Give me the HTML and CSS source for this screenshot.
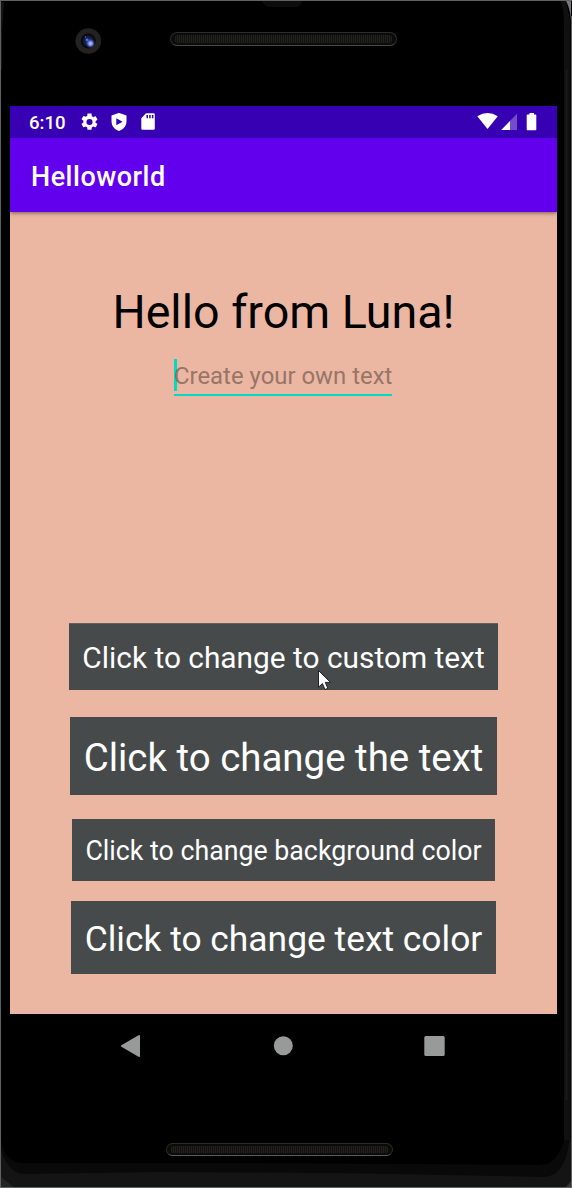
FILE: index.html
```html
<!DOCTYPE html>
<html lang="en">
<head>
<meta charset="utf-8">
<title>Helloworld</title>
<link rel="stylesheet" href="styles.css">
</head>
<body>
<div class="device">
  <svg class="shell" width="572" height="1188" viewBox="0 0 572 1188">
    <path d="M0 1134Q3 1161 20 1163H265L540 1165Q560 1164 565 1135L566 1050H572V1188H0Z" fill="#090909"/>
    <path d="M0 1145Q5 1170 22 1174L160 1172L340 1173L545 1177Q565 1175 569 1143L572 1138V1188H0Z" fill="#141414"/>
    <path d="M1 1177L14 1187H1Z" fill="#242321"/>
    <path d="M572 1180L566 1187H572Z" fill="#333"/>
    <path d="M561 1Q564 10 564 30V1140H570V20L566 1Z" fill="#101010"/>
    <path d="M566 1Q570 8 571 20V1Z" fill="#77787b"/>
    <path d="M566.5 70V1100" stroke="#1b1b1b" stroke-width="2"/>
    <path d="M262 1Q265 7 270 7H295Q301 7 302 1Z" fill="#0c0c0c"/>
    <path d="M1 2H4L2 30V70H1Z" fill="#151515"/>
    <path d="M0 .5H572M.5 0V1188M571.5 16V1188M0 1187.5H572" stroke="#606161"/>
  </svg>
  <header class="device-top">
    <svg class="camera" width="28" height="28" viewBox="0 0 28 28">
      <defs>
        <radialGradient id="lens"><stop offset="0" stop-color="#2b3c91"/><stop offset=".6" stop-color="#151d4c"/><stop offset="1" stop-color="#080910"/></radialGradient>
        <radialGradient id="glint"><stop offset="0" stop-color="#c0ccff"/><stop offset=".45" stop-color="#6f84e6"/><stop offset="1" stop-color="#2b3c91" stop-opacity="0"/></radialGradient>
      </defs>
      <circle cx="13.3" cy="14" r="12.8" fill="#232221"/>
      <circle cx="13.3" cy="14" r="7.5" fill="#08080c"/>
      <circle cx="13.3" cy="14" r="6.5" fill="url(#lens)"/>
      <circle cx="15.5" cy="16.5" r="4.8" fill="url(#glint)"/>
      <circle cx="12" cy="12.8" r="1.3" fill="#5a70cc"/>
      <circle cx="10.5" cy="10" r=".7" fill="#5a70cc"/>
    </svg>
    <div class="speaker"></div>
  </header>
  <main class="screen">
    <div class="status">
      <span class="clock">6:10</span>
      <svg class="gear" width="20" height="20" viewBox="2 2 20 20"><path fill="#fff" d="M19.14 12.94c.04-.3.06-.61.06-.94s-.02-.64-.07-.94l2.03-1.58c.18-.14.23-.41.12-.61l-1.92-3.32c-.12-.22-.37-.29-.59-.22l-2.39.96c-.5-.38-1.03-.7-1.62-.94l-.36-2.54A.48.48 0 0 0 13.92 2h-3.84c-.24 0-.43.17-.47.41l-.36 2.54c-.59.24-1.13.57-1.62.94l-2.39-.96c-.22-.08-.47 0-.59.22L2.74 8.47c-.12.21-.08.47.12.61l2.03 1.58c-.05.3-.09.63-.09.94s.02.64.07.94l-2.03 1.58c-.18.14-.23.41-.12.61l1.92 3.32c.12.22.37.29.59.22l2.39-.96c.5.38 1.03.7 1.62.94l.36 2.54c.05.24.24.41.48.41h3.84c.24 0 .44-.17.47-.41l.36-2.54c.59-.24 1.13-.56 1.62-.94l2.39.96c.22.08.47 0 .59-.22l1.92-3.32c.12-.22.07-.47-.12-.61zM12 15.6A3.6 3.6 0 1 1 12 8.4a3.6 3.6 0 0 1 0 7.2z"/></svg>
      <svg class="shield" width="16" height="19" viewBox="0 0 16 19"><path fill="#fff" fill-rule="evenodd" d="M8 -.1L15.5 2.6V8.1C15.5 13.1 12.5 16.6 8 17.9C3.5 16.6 .5 13.1 .5 8.1V2.6ZM5.3 5.2V12.2L11.6 8.7Z"/></svg>
      <svg class="sd" width="14" height="18" viewBox="0 0 14 18"><path fill="#fff" fill-rule="evenodd" d="M5 .2H12.7Q13.8 .2 13.8 1.3V15.5Q13.8 16.7 12.7 16.7H1.4Q.3 16.7 .3 15.5V5.2ZM5.5 2V5.2H7V2ZM8.2 2V5.2H9.7V2ZM10.9 2V5.2H12.4V2Z"/></svg>
      <svg class="signals" width="62" height="20" viewBox="0 0 62 20">
        <path fill="#fff" d="M.3 4.3Q10.5 -2.2 20.8 4.3L10.5 17.1Z"/>
        <path fill="#fff" fill-opacity=".3" d="M40 1.8V18H24.3Z"/>
        <path fill="#fff" d="M33 9V18H24.3Z"/>
        <path fill="#fff" d="M52.5 1H57V2.5H58.5Q59.3 2.5 59.3 3.3V17.4Q59.3 18.2 58.5 18.2H50.5Q49.7 18.2 49.7 17.4V3.3Q49.7 2.5 50.5 2.5H52.5Z"/>
      </svg>
    </div>
    <div class="toolbar">Helloworld</div>
    <div class="content">
      <h1 class="greeting">Hello from Luna!</h1>
      <div class="field"><span class="hint">Create your own text</span></div>
      <div class="actions">
        <button class="btn custom">Click to change to custom text</button>
        <button class="btn change">Click to change the text</button>
        <button class="btn background">Click to change background color</button>
        <button class="btn color">Click to change text color</button>
      </div>
    </div>
  </main>
  <nav class="nav">
    <svg width="330" height="26" viewBox="0 0 330 26" fill="#989a99">
      <path d="M1.4 12.2L18.5 2.2Q20 1.5 20 3V23Q20 24.5 18.5 23.7L1.4 13.8Q.4 13 1.4 12.2Z"/>
      <circle cx="163.3" cy="12.7" r="9.5"/>
      <rect x="304.3" y="3" width="20.4" height="20" rx="1.5"/>
    </svg>
  </nav>
  <div class="speaker bottom"></div>
  <svg class="cursor" width="16" height="22" viewBox="0 0 16 22"><path d="M.5 .5V17.2L4.4 13.6L7 19.5L9.8 18.3L7.3 12.4H12.5Z" fill="#fff" stroke="#151515" stroke-width=".9"/></svg>
</div>
</body>
</html>
```
FILE: styles.css
```css
* { box-sizing: border-box; }
body { margin: 0; background: #000; font-family: Roboto, sans-serif; }
.device { position: relative; width: 572px; height: 1188px; background: #000; overflow: hidden; display: flex; flex-direction: column; }
.shell { position: absolute; left: 0; top: 0; }
.device-top { position: relative; height: 106px; flex: none; display: flex; align-items: flex-start; padding: 27px 0 0 75px; }
.speaker {
  width: 227px; height: 14px; margin: 5px 0 0 67px; border: 1px solid #2b2b29; border-bottom-color: #484744; border-radius: 7px;
  background: repeating-linear-gradient(90deg, #24221f 0 1px, #11110f 1px 2px) content-box, #0b0b0b;
  padding: 2px 4px;
}
.speaker.bottom { position: relative; flex: none; height: 13px; margin: 65px 0 0 166px; border-bottom-color: #5a5a59; }
.screen { position: relative; flex: none; width: 547px; height: 908px; margin-left: 10px; background: #ecb7a2; display: flex; flex-direction: column; }
.status { height: 32px; flex: none; background: #3700b3; display: flex; align-items: flex-start; padding-left: 19px; color: #fff; }
.clock { width: 52px; font-size: 18.6px; font-weight: 500; line-height: 32px; padding-top: 1px; height: 32px; }
.gear { margin-top: 7px; width: 17px; height: 18px; }
.shield { margin: 7px 0 0 13px; }
.sd { margin: 7px 0 0 14px; }
.signals { margin: 6px 18px 0 auto; }
.toolbar { height: 74px; flex: none; background: #6200ee; color: #fff; font-size: 27px; font-weight: 500; letter-spacing: .5px; line-height: 74px; padding: 2px 0 0 21px; box-shadow: 0 1px 4px rgba(0,0,0,.5); clip-path: inset(0 0 -8px 0); position: relative; }
.content { flex: 1; display: flex; flex-direction: column; align-items: center; padding-top: 68px; }
.greeting { margin: 0; font-size: 46.6px; font-weight: 400; line-height: 64px; color: #000; white-space: nowrap; }
.field { margin: 15px 1px 0 0; width: 218px; height: 37px; border-bottom: 2px solid #03dac5; }
.hint { display: block; height: 32px; line-height: 35px; font-size: 23.9px; color: #977567; white-space: nowrap; box-shadow: inset 3px 0 #03dac5; }
.actions { margin-top: 227px; display: flex; flex-direction: column; align-items: center; }
.btn { border: 0; border-radius: 0; padding: 3px 0 0; background: #464a4a; color: #fff; font-family: inherit; font-weight: 400; white-space: nowrap; }
.custom { width: 429px; height: 67px; padding-top: 2px; font-size: 29.85px; box-shadow: inset 0 1px #626060; }
.change { width: 427px; height: 78px; margin-top: 27px; font-size: 38.45px; }
.background { width: 423px; height: 62px; margin-top: 24px; padding-top: 2px; font-size: 26.75px; }
.color { width: 425px; height: 73px; margin-top: 20px; padding-top: 2px; font-size: 35.4px; }
.nav { position: relative; flex: none; height: 64px; padding: 19px 0 0 120px; }
.cursor { position: absolute; left: 318px; top: 670px; }
```
